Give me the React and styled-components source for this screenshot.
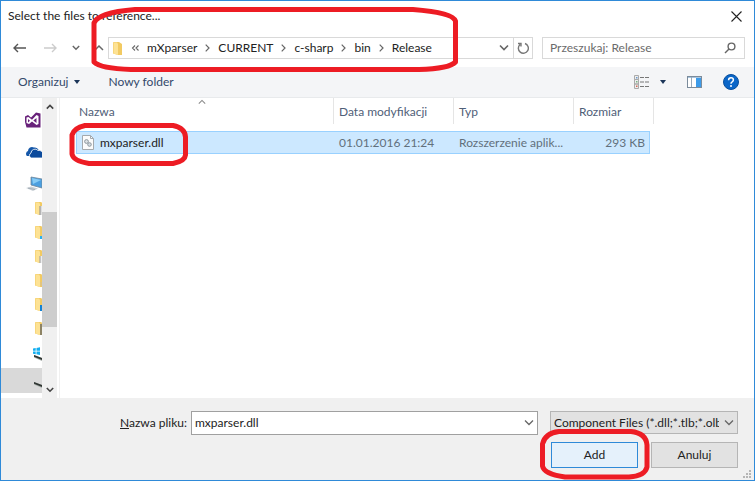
import React from "react";
import styled, { createGlobalStyle, css } from "styled-components";

const GlobalStyle = createGlobalStyle`
  *, *::before, *::after { box-sizing: border-box; }
  body { margin: 0; background: #fff; }
  body, button, input, select {
    font-family: Lato, "Open Sans", sans-serif;
    font-size: 12px;
    line-height: 16px;
    color: #222;
  }
  button { padding: 0; border: 0; background: none; }
  svg { display: block; flex: none; }
`;

const Dialog = styled.main`
  display: flex;
  flex-direction: column;
  min-height: 100vh;
  border: 1px solid #2f8ad8;
  background: #fff;
  overflow: hidden;
`;

const TitleBar = styled.header`
  display: flex;
  align-items: center;
  justify-content: space-between;
  height: 30px;
  padding: 0 12px 0 7px;
`;

const Title = styled.h1`
  margin: 0;
  font-size: 12px;
  font-weight: 400;
`;

const IconButton = styled.button`
  display: flex;
  align-items: center;
  justify-content: center;
  width: ${(p) => p.$width || 16}px;
  height: ${(p) => p.$height || 20}px;
`;

const NavRow = styled.nav`
  display: flex;
  align-items: center;
  height: 36px;
  padding: 0 9px 2px 11px;
`;

const NavButtons = styled.div`
  display: flex;
  align-items: center;
  width: 96px;
  gap: 14px;
`;

const AddressBar = styled.div`
  position: relative;
  display: flex;
  flex: 1;
  align-items: center;
  height: 22px;
  padding-left: 4px;
  border: 1px solid #d9d9d9;
`;

const Crumbs = styled.ol`
  display: flex;
  flex: 1;
  align-items: center;
  gap: 8px;
  margin: 0;
  padding: 0 0 0 3px;
  list-style: none;
`;

const Crumb = styled.li`
  display: flex;
  align-items: center;
  gap: 8px;
`;

const CrumbLink = styled.a`
  color: #222;
  text-decoration: none;
`;

const RefreshButton = styled(IconButton)`
  border-left: 1px solid #d9d9d9;
`;

const SearchBox = styled.label`
  display: flex;
  align-items: center;
  width: 203px;
  height: 22px;
  margin-left: 9px;
  padding: 0 8px 0 7px;
  border: 1px solid #d9d9d9;
`;

const SearchInput = styled.input`
  flex: 1;
  min-width: 0;
  padding: 0;
  border: 0;
  outline: 0;
  background: none;
  &::placeholder { color: #6b6b6b; opacity: 1; }
`;

const Toolbar = styled.div`
  display: flex;
  align-items: center;
  height: 31px;
  padding: 0 15px 0 17px;
  border-bottom: 1px solid #e8eaec;
  background: #f4f5f7;
`;

const ToolButton = styled.button`
  display: flex;
  align-items: center;
  gap: 5px;
  margin-right: 29px;
  color: #33496b;
`;

const ToolIcons = styled.div`
  display: flex;
  align-items: center;
  gap: 21px;
  margin-left: auto;
`;

const Body = styled.div`
  display: flex;
  flex: 1;
`;

const Tree = styled.aside`
  display: flex;
  flex-direction: column;
  gap: 8px;
  width: 41px;
  padding-top: 10px;
  overflow: hidden;
`;

const TreeGroup = styled.ul`
  margin: 0;
  padding: 0;
  list-style: none;
`;

const TreeItem = styled.li`
  display: flex;
  align-items: center;
  height: ${(p) => p.$height || 24}px;
  padding-left: ${(p) => p.$indent}px;
  overflow: hidden;
  background: ${(p) => (p.$selected ? "#d9d9d9" : "none")};
`;

const Scrollbar = styled.div`
  display: flex;
  flex-direction: column;
  width: 15px;
  background: #f0f0f0;
`;

const ScrollSpace = styled.div`
  flex: ${(p) => p.$share};
`;

const ScrollThumb = styled.div`
  flex: 115;
  background: #cdcdcd;
`;

const Files = styled.section`
  flex: 1;
  margin-left: 2px;
  padding-left: 16px;
  border-left: 1px solid #f0f0f0;
`;

const FileTable = styled.table`
  width: 578px;
  table-layout: fixed;
  border-collapse: separate;
  border-spacing: 0;
`;

const Col = styled.col`
  width: ${(p) => p.$width}px;
`;

const HeadCell = styled.th`
  padding: 0 0 7px;
  font-weight: 400;
  text-align: left;
  color: #4f6078;
`;

const HeadLabel = styled.div`
  position: relative;
  height: 26px;
  padding: 6px 0 0 ${(p) => p.$pad || 5}px;
  border-right: 1px solid #e5e5e5;
`;

const SortMark = styled.span`
  position: absolute;
  top: 0;
  left: 50%;
  margin-left: -7px;
`;

const cellEdge = css`
  border: 1px solid #99d1ff;
  border-left-width: ${(p) => (p.$first ? 1 : 0)}px;
  border-right-width: ${(p) => (p.$last ? 1 : 0)}px;
`;

const Cell = styled.td`
  ${cellEdge}
  height: 23px;
  padding: 0 4px 0 5px;
  background: #cce8ff;
  color: #62707c;
  white-space: nowrap;
  text-align: ${(p) => (p.$last ? "right" : "left")};
`;

const FileName = styled.div`
  position: relative;
  display: flex;
  align-items: center;
  gap: 6px;
  color: #222;
`;

const Footer = styled.footer`
  position: relative;
  display: grid;
  grid-template-columns: 186px 1fr 188px;
  row-gap: 7px;
  align-content: start;
  height: 82px;
  padding: 13px 16px 0 0;
  background: #f0f0f0;
`;

const FieldLabel = styled.label`
  align-self: center;
  text-align: right;
`;

const ComboBox = styled.div`
  display: flex;
  align-items: center;
  height: 24px;
  margin: 0 12px 0 4px;
  padding: 0 3px;
  border: 1px solid #a0a0a0;
  background: #fff;
`;

const ComboInput = styled.input`
  flex: 1;
  min-width: 0;
  padding: 0;
  border: 0;
  outline: 0;
`;

const SelectWrap = styled.div`
  display: flex;
  align-items: center;
  height: 23px;
  padding: 0 3px;
  border: 1px solid #b5b5b5;
  background: #e2e2e2;
`;

const Select = styled.select`
  appearance: none;
  flex: 1;
  min-width: 0;
  margin-right: 5px;
  padding: 0;
  border: 0;
  background: none;
  text-overflow: clip;
`;

const Actions = styled.div`
  grid-column: 3;
  display: grid;
  grid-template-columns: 1fr 1fr;
  gap: 13px;
  padding-left: 1px;
`;

const ActionButton = styled.button`
  position: relative;
  height: 26px;
  border: 1px solid ${(p) => (p.$primary ? "#2f8ad8" : "#b5b5b5")};
  background: ${(p) => (p.$primary ? "#e5f1fb" : "#e2e2e2")};
`;

const Marker = styled.svg`
  position: absolute;
  z-index: 1;
  top: ${(p) => p.$top}px;
  left: ${(p) => p.$left}px;
  fill: none;
  stroke: #ed1c24;
  stroke-width: 5;
  stroke-linejoin: round;
  pointer-events: none;
`;

const Grip = styled.svg`
  position: absolute;
  right: 2px;
  bottom: 1px;
`;

const Chevron = ({ dir = "down", size = 8, color = "#666", weight = 1.3 }) => {
  const paths = {
    down: "M1 2.5 5 6.5 9 2.5",
    up: "M1 7 5 3 9 7",
  };
  return (
    <svg width={size} height={size} viewBox="0 0 10 10" fill="none" stroke={color} strokeWidth={weight}>
      <path d={paths[dir]} />
    </svg>
  );
};

const CrumbArrow = () => (
  <svg width="5" height="8" viewBox="0 0 5 8" fill="none" stroke="#666" strokeWidth="1.2">
    <path d="M.7 .7 4 4 .7 7.3" />
  </svg>
);

const Arrow = ({ flip, color }) => (
  <svg width="14" height="10" viewBox="0 0 14 10" fill="none" stroke={color} strokeWidth="1.4">
    <path d={flip ? "M1 5H13M9 1 13 5 9 9" : "M13 5H1M5 1 1 5 5 9"} />
  </svg>
);

const Triangle = () => (
  <svg width="6" height="4" viewBox="0 0 6 4">
    <path d="M0 0H6L3 4Z" fill="#1b3558" />
  </svg>
);

const FolderIcon = ({ detail }) => (
  <svg width="9" height="15" viewBox="0 0 9 15">
    <path d="M0 1.5 1 1H6L9 3V14H5L0 12.500Z" fill="#f2ca62" />
    <path d="M.5 1.500H4L5 3V14L.5 12.500Z" fill="#fde294" />
    {detail && <rect x="5" y={detail.y} width="4" height={detail.h} fill={detail.fill} />}
    {detail && detail.edge && <path d={`M5 ${detail.y}V14`} stroke={detail.edge} />}
  </svg>
);

const VisualStudioIcon = () => (
  <svg width="16" height="16" viewBox="0 0 16 16">
    <path d="M0 4.500 3 3 6 5.500 11 .5 15.500 1.500V15.500H1.500L0 10Z" fill="#68217a" />
    <path d="M1.500 5.500 3.500 5 7 7.800 11.500 3 13.500 4V12L11.500 13 7 9.500 4 12 1.500 11Z" fill="#fff" />
    <path d="M3 7V10.500L5 8.700ZM11.500 6V11L8.300 8.600Z" fill="#68217a" />
  </svg>
);

const CloudIcon = () => (
  <svg width="18" height="13" viewBox="0 0 18 13">
    <path d="M2 10A3 3 0 0 1 3 5 4 4 0 0 1 9 1.5 4 4 0 0 1 13 3L14 5 5 10Z" fill="#1557a8" />
    <path d="M6 12A2.8 2.8 0 0 1 6 7 4 4 0 0 1 13 4.500 4 4 0 0 1 18 8V12Z" fill="#0b4a9c" stroke="#fff" strokeWidth=".8" />
  </svg>
);

const ComputerIcon = () => (
  <svg width="17" height="16" viewBox="0 0 17 16">
    <path d="M5 1 16 3V12L5 9Z" fill="#4b9fe0" stroke="#6f8598" strokeWidth=".8" />
    <path d="M6 2 15 4 7 8Z" fill="#86cbf5" />
    <path d="M0 12 5 10.500 12 12.500 7 15Z" fill="#c9d0d6" />
    <path d="M2 12.200 9 13.500" stroke="#8d98a3" strokeWidth=".6" />
  </svg>
);

const DriveIcon = ({ windows }) => (
  <svg width="9" height="14" viewBox="0 0 9 14">
    {windows && (
      <path d="M0 1.500 2.700 1V3.700H0ZM3.500 .9 7 .3V3.700H3.500ZM0 4.500H2.700V7.200L0 6.700ZM3.500 4.500H7V7.900L3.500 7.300Z" fill="#12aef0" />
    )}
    <path d="M1 8 9 11V14L1 10.500Z" fill="#a9b0ac" />
    <path d="M1 8 9 11V13L1 9.800Z" fill="#303633" />
  </svg>
);

const DllIcon = () => (
  <svg width="12" height="15" viewBox="0 0 12 15">
    <path d="M.5 .5H8.500L11.500 3.500V14.500H.5Z" fill="#fbfbfb" stroke="#a4a9ad" />
    <path d="M8.500 .5V3.500H11.500" fill="none" stroke="#a4a9ad" />
    <circle cx="4.500" cy="6.500" r="1.900" fill="#dce1e5" stroke="#8e989f" />
    <circle cx="7.500" cy="9.500" r="1.800" fill="#d2dbe2" stroke="#8e989f" />
  </svg>
);

const FOLDERS = [
  { y: 5, h: 9, fill: "#dedede", edge: "#8a8a8a" },
  { y: 11, h: 3, fill: "#29b0ee" },
  { y: 7, h: 7, fill: "#eeeeee", edge: "#9a9a9a" },
  { y: 9, h: 4, fill: "#e3c57c" },
  { y: 8, h: 6, fill: "#1482d2" },
  { y: 3, h: 11, fill: "#8d8364" },
];

const CRUMBS = ["mXparser", "CURRENT", "c-sharp", "bin", "Release"];

export default function App() {
  return (
    <>
      <GlobalStyle />
      <Dialog>
        <TitleBar>
          <Title>Select the files to reference...</Title>
          <IconButton aria-label="Close" $width={11}>
            <svg width="11" height="11" viewBox="0 0 11 11" stroke="#222" strokeWidth="1.1">
              <path d="M.5 .5 10.500 10.500M10.500 .5 .5 10.500" />
            </svg>
          </IconButton>
        </TitleBar>

        <NavRow>
          <NavButtons>
            <IconButton aria-label="Back"><Arrow color="#555" /></IconButton>
            <IconButton aria-label="Forward"><Arrow flip color="#ccc" /></IconButton>
            <IconButton aria-label="Recent locations" $width={8}><Chevron weight={1.8} /></IconButton>
            <IconButton aria-label="Up" $width={10}><Chevron dir="up" size={10} weight={1.5} /></IconButton>
          </NavButtons>
          <AddressBar>
            <FolderIcon />
            <Crumbs>
              <Crumb>
                <svg width="14" height="8" viewBox="0 0 14 8" fill="none" stroke="#666" strokeWidth="1.1">
                  <path d="M10 1.500 7.500 4 10 6.500M13.500 1.500 11 4 13.500 6.500" />
                </svg>
              </Crumb>
              {CRUMBS.map((name, i) => (
                <Crumb key={name}>
                  <CrumbLink href="#">{name}</CrumbLink>
                  {i < CRUMBS.length - 1 && <CrumbArrow />}
                </Crumb>
              ))}
            </Crumbs>
            <IconButton aria-label="Previous locations" $width={19}><Chevron size={10} weight={1.6} /></IconButton>
            <RefreshButton aria-label="Refresh" $width={19}>
              <svg width="12" height="12" viewBox="0 0 12 12" fill="none" stroke="#777" strokeWidth="1.4">
                <path d="M8 1.500A5 5 0 1 1 3 2.500M1 1.500H4V4.500" />
              </svg>
            </RefreshButton>
            <Marker $top={-31} $left={-18} width="368" height="68" viewBox="0 0 368 68">
              <path d="M44 2.500H322C342 4 362 7 364.500 14V55C360 60 345 62 328 62.500H40C25 62 8 60 3 55V16C6 8 25 4 44 2.500Z" />
            </Marker>
          </AddressBar>
          <SearchBox>
            <SearchInput type="search" aria-label="Przeszukaj: Release" placeholder="Przeszukaj: Release" />
            <svg width="12" height="12" viewBox="0 0 12 12" fill="none" stroke="#666" strokeWidth="1.4">
              <circle cx="7.500" cy="4.500" r="3.400" />
              <path d="M5 7 1 11" />
            </svg>
          </SearchBox>
        </NavRow>

        <Toolbar>
          <ToolButton>Organizuj <Triangle /></ToolButton>
          <ToolButton>Nowy folder</ToolButton>
          <ToolIcons>
            <IconButton aria-label="View" $width={32}>
              <svg width="32" height="14" viewBox="0 0 32 14">
                <path d="M.5 .5H4.500V4.500H.5ZM.5 4.500H4.500V9H.5ZM.5 9H4.500V13.500H.5Z" fill="#eee" stroke="#aaa" />
                <path d="M2 2H3.500V3.500H2Z" fill="#6e9acb" />
                <path d="M2 6H3.500V7.500H2Z" fill="#79b184" />
                <path d="M2 10.500H3.500V12H2Z" fill="#d46a55" />
                <path d="M6 2.500H10M11 2.500H15M6 7H10M11 7H15M6 11.500H10M11 11.500H15" stroke="#777" />
                <path d="M26 5H32L29 9Z" fill="#1b3558" />
              </svg>
            </IconButton>
            <IconButton aria-label="Preview pane" $width={15}>
              <svg width="15" height="12" viewBox="0 0 15 12">
                <rect x=".5" y=".5" width="14" height="11" fill="#fff" stroke="#7b8b9b" />
                <path d="M1 1H14V2H1Z" fill="#a9c5df" />
                <rect x="9" y="2" width="5" height="9" fill="#3d9be9" />
                <path d="M4.500 1V11" stroke="#9ab" />
              </svg>
            </IconButton>
            <IconButton aria-label="Help">
              <svg width="16" height="16" viewBox="0 0 16 16">
                <circle cx="8" cy="8" r="7.500" fill="#0b66c8" stroke="#0a4f9c" />
                <path d="M5.600 6.200Q5.600 3.800 8 3.800T10.400 6Q10.400 7 9.200 7.800 8 8.500 8 9.700" fill="none" stroke="#fff" strokeWidth="1.500" />
                <circle cx="8" cy="12" r="1" fill="#fff" />
              </svg>
            </IconButton>
          </ToolIcons>
        </Toolbar>

        <Body>
          <Tree aria-label="Folders">
            <TreeGroup><TreeItem $indent={24}><VisualStudioIcon /></TreeItem></TreeGroup>
            <TreeGroup><TreeItem $indent={24}><CloudIcon /></TreeItem></TreeGroup>
            <TreeGroup>
              <TreeItem $indent={25}><ComputerIcon /></TreeItem>
              {FOLDERS.map((detail) => (
                <TreeItem key={detail.fill} $indent={34}><FolderIcon detail={detail} /></TreeItem>
              ))}
              <TreeItem $indent={32} $height={28}><DriveIcon windows /></TreeItem>
              <TreeItem $indent={32} $height={25} $selected><DriveIcon /></TreeItem>
            </TreeGroup>
          </Tree>
          <Scrollbar>
            <IconButton aria-label="Scroll up" $width={15} $height={17}><Chevron dir="up" color="#444" weight={2} /></IconButton>
            <ScrollSpace $share={97} />
            <ScrollThumb />
            <ScrollSpace $share={54} />
            <IconButton aria-label="Scroll down" $width={15} $height={17}><Chevron color="#444" weight={2} /></IconButton>
          </Scrollbar>
          <Files>
            <FileTable>
              <colgroup>
                <Col $width={258} /><Col $width={120} /><Col $width={120} /><Col $width={76} /><Col $width={4} />
              </colgroup>
              <thead>
                <tr>
                  <HeadCell>
                    <HeadLabel $pad={3}>
                      Nazwa
                      <SortMark><Chevron dir="up" color="#888" /></SortMark>
                    </HeadLabel>
                  </HeadCell>
                  <HeadCell><HeadLabel>Data modyfikacji</HeadLabel></HeadCell>
                  <HeadCell><HeadLabel>Typ</HeadLabel></HeadCell>
                  <HeadCell colSpan={2}><HeadLabel>Rozmiar</HeadLabel></HeadCell>
                </tr>
              </thead>
              <tbody>
                <tr>
                  <Cell $first>
                    <FileName>
                      <DllIcon />
                      mxparser.dll
                      <Marker $top={-12} $left={-13} width="122" height="46" viewBox="0 0 122 46">
                        <path d="M16 2.500H104Q116 5 116.500 14V32Q116 38 104 40.500H20Q4 38 3 31V12Q5 5 16 2.500Z" />
                      </Marker>
                    </FileName>
                  </Cell>
                  <Cell>01.01.2016 21:24</Cell>
                  <Cell>Rozszerzenie aplik...</Cell>
                  <Cell $last>293 KB</Cell>
                  <td />
                </tr>
              </tbody>
            </FileTable>
          </Files>
        </Body>

        <Footer>
          <FieldLabel htmlFor="file-name"><u>N</u>azwa pliku:</FieldLabel>
          <ComboBox>
            <ComboInput id="file-name" defaultValue="mxparser.dll" />
            <Chevron size={10} />
          </ComboBox>
          <SelectWrap>
            <Select aria-label="File type">
              <option>Component Files (*.dll;*.tlb;*.olb</option>
            </Select>
            <Chevron size={10} />
          </SelectWrap>
          <Actions>
            <ActionButton $primary>
              Add
              <Marker $top={-14} $left={-13} width="112" height="52" viewBox="0 0 112 52">
                <path d="M20 2.500H92Q107 4 108 16V38Q106 47 90 48H26Q5 45 3.500 37V15Q6 4 20 2.500Z" />
              </Marker>
            </ActionButton>
            <ActionButton>Anuluj</ActionButton>
          </Actions>
          <Grip width="9" height="9" viewBox="0 0 9 9" fill="#b5b5b5">
            <path d="M6 0H8V2H6ZM3 3H5V5H3ZM6 3H8V5H6ZM0 6H2V8H0ZM3 6H5V8H3ZM6 6H8V8H6Z" />
          </Grip>
        </Footer>
      </Dialog>
    </>
  );
}
